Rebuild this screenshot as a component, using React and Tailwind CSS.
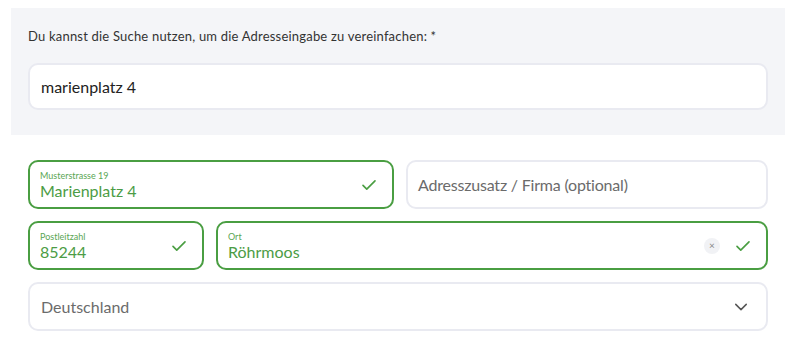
import React from 'react';

const font = { fontFamily: 'Lato, "Noto Sans", sans-serif' };

function Check() {
  return (
    <svg width="18" height="18" viewBox="0 0 24 24" fill="none" stroke="#4a9e42" strokeWidth="2.2" strokeLinecap="round" strokeLinejoin="round">
      <path d="M4 12.5l5 5L20 6.5" />
    </svg>
  );
}

function Field({ label, value, className = '', clear }) {
  return (
    <div className={`min-w-0 h-[49px] rounded-[10px] border-2 border-[#4a9e42] flex items-center pl-[10px] pr-[14px] ${className}`}>
      <div className="flex-1 flex flex-col leading-none">
        <span className="text-[9px] text-[#5aa653] mb-[3px]">{label}</span>
        <span className="text-[16px] text-[#4c9c45]">{value}</span>
      </div>
      {clear && (
        <div className="w-[16px] h-[16px] rounded-full bg-[#f1f2f5] text-[#888] text-[10px] flex items-center justify-center mr-[14px]">×</div>
      )}
      <Check />
    </div>
  );
}

export default function App() {
  return (
    <div className="w-[801px] h-[353px] bg-white pt-[8px]" style={font}>
      <div className="ml-[11px] w-[774px] h-[127px] bg-[#f4f5f8] pt-[22px] px-[17px]">
        <p className="text-[13px] tracking-[0.2px] text-[#333] leading-none">Du kannst die Suche nutzen, um die Adresseingabe zu vereinfachen: *</p>
        <div className="mt-[20px] h-[47px] rounded-[10px] border-2 border-[#e9eaf1] bg-white flex items-center px-[11px]">
          <span className="text-[16px] text-[#222]">marienplatz 4</span>
        </div>
      </div>
      <div className="px-[28px] pt-[25px] flex flex-col gap-[12px] w-[796px]">
        <div className="flex gap-[12px]">
          <Field label="Musterstrasse 19" value="Marienplatz 4" className="flex-1" />
          <div className="flex-1 min-w-0 h-[49px] rounded-[10px] border-2 border-[#e9eaf1] flex items-center px-[10px]">
            <span className="text-[16px] text-[#6b6b6b] tracking-[-0.2px]">Adresszusatz / Firma (optional)</span>
          </div>
        </div>
        <div className="flex gap-[12px]">
          <Field label="Postleitzahl" value="85244" className="w-[176px]" />
          <Field label="Ort" value="Röhrmoos" className="flex-1" clear />
        </div>
        <div className="h-[49px] rounded-[10px] border-2 border-[#e9eaf1] flex items-center pl-[11px] pr-[16px]">
          <span className="flex-1 text-[16px] text-[#6b6b6b]">Deutschland</span>
          <svg width="18" height="18" viewBox="0 0 24 24" fill="none" stroke="#555" strokeWidth="2" strokeLinecap="round" strokeLinejoin="round">
            <path d="M5 8.5l7 7 7-7" />
          </svg>
        </div>
      </div>
    </div>
  );
}
